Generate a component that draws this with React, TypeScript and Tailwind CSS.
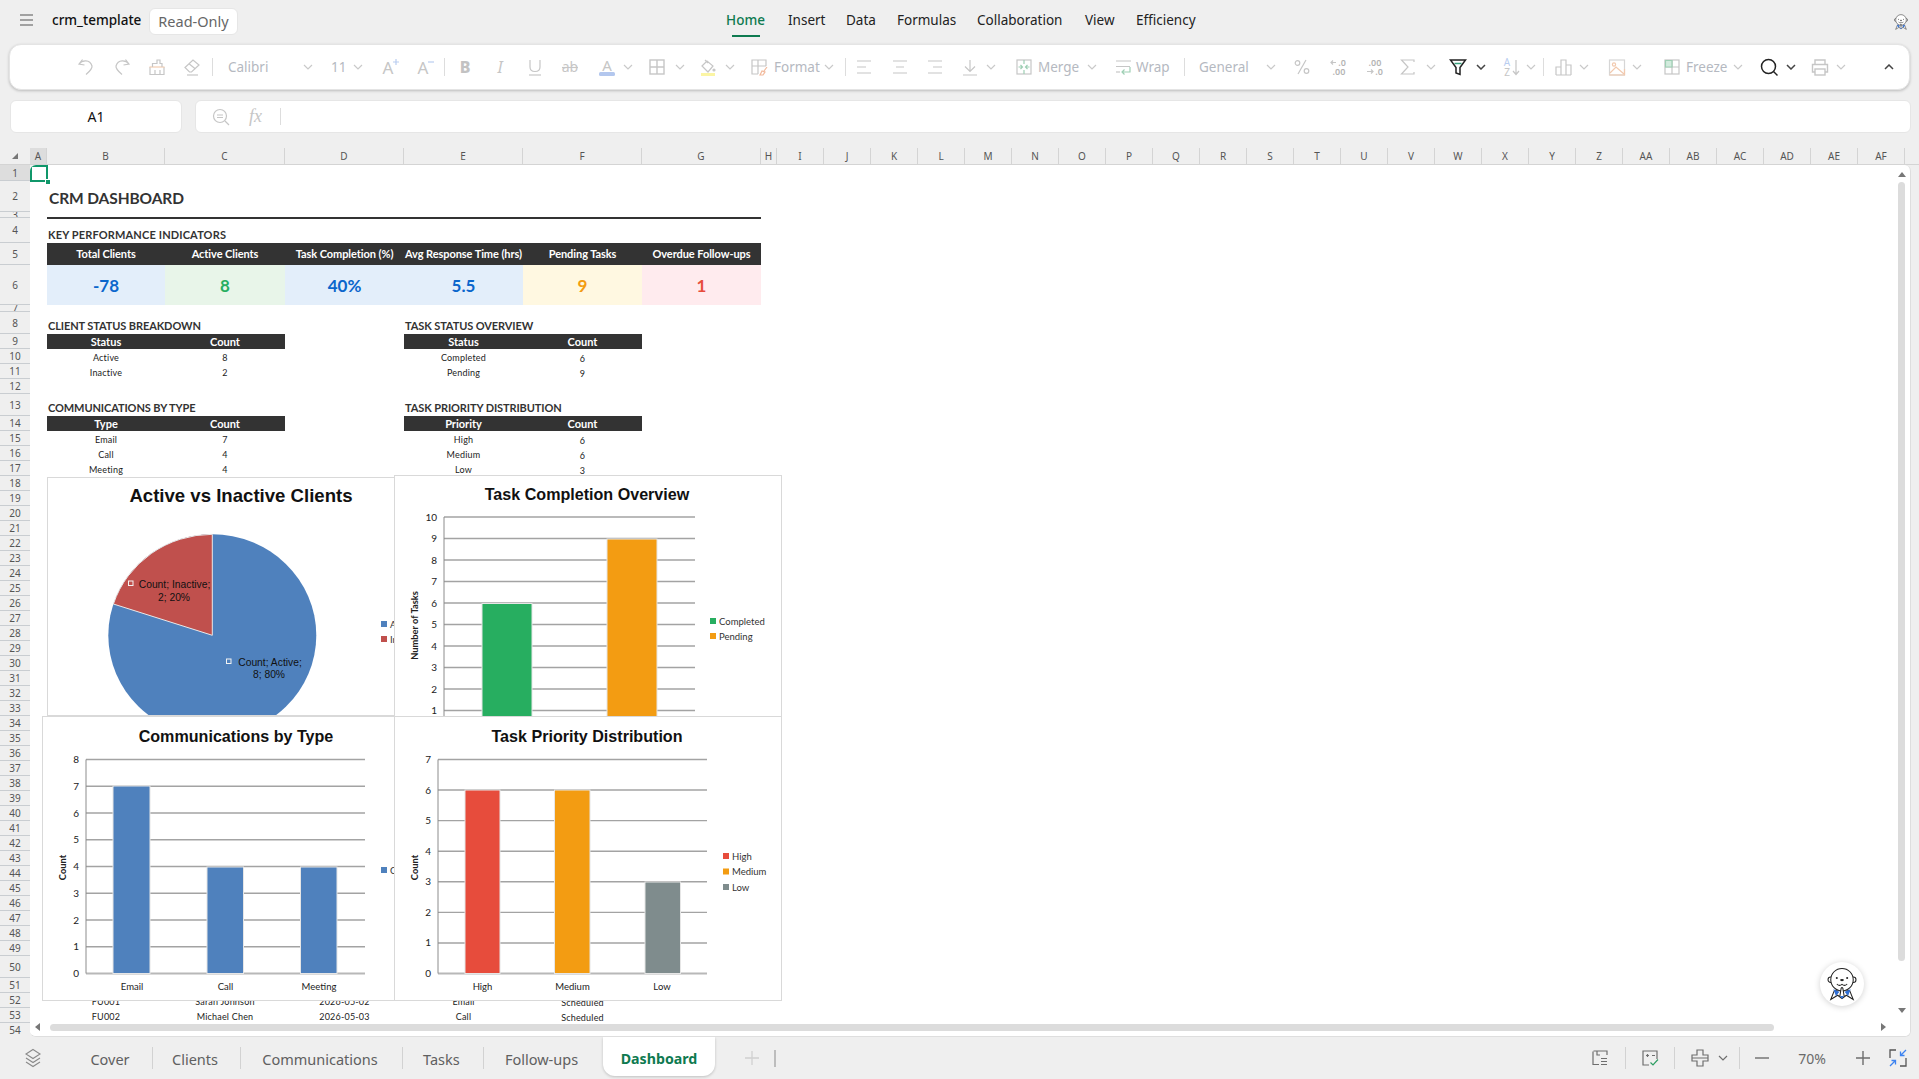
import React from 'react';

const G = '#c6c6c6';
function S({ c = '', stroke = G, sw = 1.2, children }: { c?: string; stroke?: string; sw?: number; children?: React.ReactNode }) {
  return (
    <svg width="20" height="20" viewBox="0 0 20 20" fill="none" stroke={stroke} strokeWidth={sw} className={`shrink-0 overflow-visible ${c}`}>
      {children}
    </svg>
  );
}
function Chev({ c = '', dark = false, up = false }: { c?: string; dark?: boolean; up?: boolean }) {
  return (
    <svg width="10" height="6" viewBox="0 0 10 6" fill="none" stroke={dark ? '#444' : '#c9c9c9'} strokeWidth={dark ? 1.5 : 1.2} className={`shrink-0 ${c}`}>
      <path d={up ? 'M1 5 L5 1 L9 5' : 'M1 1 L5 5 L9 1'} />
    </svg>
  );
}
function Sep({ c = '' }: { c?: string }) {
  return <div className={`w-px h-[18px] bg-[#dddddd] shrink-0 ${c}`} />;
}
function L({ c = '', children }: { c?: string; children: React.ReactNode }) {
  return <span className={`shrink-0 whitespace-nowrap text-[13.5px] leading-[20px] text-[#b5b9c1] font-['Noto_Sans'] ${c}`}>{children}</span>;
}
function GlyphText({ x, y, size, fill = G, weight, italic, children }: { x: number; y: number; size: number; fill?: string; weight?: number; italic?: boolean; children: React.ReactNode }) {
  return (
    <text x={x} y={y} fontSize={size} fill={fill} stroke="none" fontWeight={weight} fontStyle={italic ? 'italic' : undefined} textAnchor="middle" fontFamily="Noto Sans, sans-serif">
      {children}
    </text>
  );
}

function Otter({ size }: { size: number }) {
  return (
    <svg width={size} height={size} viewBox="0 0 44 44" fill="none" stroke="#222" strokeWidth="1.2">
      <path d="M9 40 L13 30 L19 28 L22 33 L25 28 L31 30 L35 40 L27 35 L22 39 L17 35 Z" fill="#fff" />
      <path d="M12 28 L19 31 L15 36 Z M32 28 L25 31 L29 36 Z M19 35 L25 35 L22 39.5 Z" fill="#2f6fd6" stroke="none" />
      <circle cx="9" cy="17" r="3.2" fill="#fff" />
      <circle cx="35" cy="17" r="3.2" fill="#fff" />
      <ellipse cx="22" cy="17" rx="13" ry="13" fill="#fff" />
      <circle cx="16" cy="15" r="1.2" fill="#222" stroke="none" />
      <circle cx="28" cy="15" r="1.2" fill="#222" stroke="none" />
      <ellipse cx="22" cy="17.5" rx="2.2" ry="1.3" fill="#222" stroke="none" />
      <path d="M16 22 Q19 25 22 22.5 Q25 25 28 22" />
      <path d="M19.5 36 L21 27 Q22 25 23 27 L24.5 36" fill="#fff" />
    </svg>
  );
}

function Toolbar() {
  return (
    <div className="mx-[9px] h-[46px] shrink-0 bg-white rounded-[12px] border border-[#e4e4e4] shadow-[0_1px_3px_rgba(0,0,0,0.22)] flex items-center">
      <S c="ml-[66px]"><path d="M6.5 2.5 L3 7 L8.5 8 M3 7 C6 3 14 2 16 9 C16.5 12 13 15 10 17.5" /></S>
      <S c="ml-[16px] -scale-x-100"><path d="M6.5 2.5 L3 7 L8.5 8 M3 7 C6 3 14 2 16 9 C16.5 12 13 15 10 17.5" /></S>
      <S c="ml-[15px]">
        <path d="M3 10 V17.5 H17 V10" /><path d="M2.5 10 H17.5" stroke="#f3cdb0" /><path d="M5.5 10 V6.5 H10 V3 H13 V6.5 H15 V10 M8 13 V17.5 M13 13 V17.5" />
      </S>
      <S c="ml-[15px]"><path d="M3 10.5 L11 3 L17 8 L9.5 15 H7.5 Z M7 6.8 L13.5 12" /><path d="M5 18 H16" /></S>
      <Sep c="ml-[10px]" />
      <L c="ml-[15px] w-[40px]">Calibri</L>
      <Chev c="ml-[35px]" />
      <L c="ml-[18px] w-[14px]">11</L>
      <Chev c="ml-[8px]" />
      <S c="ml-[17px]"><GlyphText x={8} y={17} size={17}>A</GlyphText><path d="M13 5 H19 M16 2 V8" stroke="#b9cdf0" /></S>
      <S c="ml-[15px]"><GlyphText x={8} y={17} size={17}>A</GlyphText><path d="M13 5 H19" stroke="#b9cdf0" /></S>
      <Sep c="ml-[9px]" />
      <S c="ml-[10px]"><GlyphText x={10} y={16} size={16} weight={800} fill="#c2c2c2">B</GlyphText></S>
      <S c="ml-[15px]"><GlyphText x={10} y={16} size={16} italic>I</GlyphText></S>
      <S c="ml-[15px]"><path d="M5 3 V10 Q5 14.5 10 14.5 Q15 14.5 15 10 V3" /><path d="M4 18 H16" /></S>
      <S c="ml-[15px]"><GlyphText x={10} y={15} size={14}>ab</GlyphText><path d="M2 10.5 H18" /></S>
      <S c="ml-[17px]"><GlyphText x={10} y={13.5} size={15}>A</GlyphText><rect x="2" y="15" width="16" height="4" rx="1.5" fill="#b3c7ee" stroke="none" /></S>
      <Chev c="ml-[6px]" />
      <S c="ml-[14px]" sw={1.4}><rect x="3" y="3" width="14" height="14" /><path d="M10 3 V17 M3 10 H17" /></S>
      <Chev c="ml-[8px]" />
      <S c="ml-[13px]"><path d="M4 9 L9 4 L15 9 L10 15 Z M7 3 L10 6" /><circle cx="16" cy="13" r="1" fill={G} /><rect x="3" y="16" width="14" height="3" fill="#fbf5a4" stroke="none" /></S>
      <Chev c="ml-[7px]" />
      <S c="ml-[14px]"><path d="M9 17 H3 V3 H17 V9 M3 9 H17 M9 3 V17" /><path d="M11 18 L13 14 L16 15 L14 18 Z M15 14 L18 10" stroke="#f2b99b" /></S>
      <L c="ml-[5px] w-[44px]">Format</L>
      <Chev c="ml-[6px]" />
      <Sep c="ml-[11px]" />
      <S c="ml-[8px]"><path d="M3 4 H17 M3 10 H12 M3 16 H17" /></S>
      <S c="ml-[16px]"><path d="M3 4 H17 M6 10 H14 M3 16 H17" /></S>
      <S c="ml-[15px]"><path d="M3 4 H17 M8 10 H17 M3 16 H17" /></S>
      <S c="ml-[15px]"><path d="M10 3 V14 M5 9.5 L10 14.5 L15 9.5 M3 18 H17" /></S>
      <Chev c="ml-[6px]" />
      <S c="ml-[18px]"><rect x="3" y="3" width="14" height="14" /><path d="M10 3 V7 M10 13 V17 M4.5 10 H8 M6.5 8 L8.5 10 L6.5 12 M15.5 10 H12 M13.5 8 L11.5 10 L13.5 12" stroke="#9ecfb4" /></S>
      <L c="ml-[4px] w-[41px]">Merge</L>
      <Chev c="ml-[8px]" />
      <S c="ml-[16px]"><path d="M3 4 H18 M3 9.5 H17" /><path d="M3 15 H7" /><path d="M17 10 V15 H9 M11.5 12.5 L9 15 L11.5 17.5" stroke="#9ecfb4" /></S>
      <L c="ml-[3px] w-[33px]">Wrap</L>
      <Sep c="ml-[15px]" />
      <L c="ml-[14px] w-[48px]">General</L>
      <Chev c="ml-[19px]" />
      <S c="ml-[16px]"><path d="M14 3 L6 17" /><circle cx="5.5" cy="6" r="2.3" /><circle cx="14.5" cy="14" r="2.3" /></S>
      <S c="ml-[16px]">
        <GlyphText x={14} y={9} size={9} fill="#b4b4b4" weight={600}>.0</GlyphText><GlyphText x={11} y={18} size={9} fill="#b4b4b4" weight={600}>.00</GlyphText><path d="M8 5.5 H3 M5 3.5 L3 5.5 L5 7.5" />
      </S>
      <S c="ml-[16px]">
        <GlyphText x={11} y={9} size={9} fill="#b4b4b4" weight={600}>.00</GlyphText><GlyphText x={15} y={18} size={9} fill="#b4b4b4" weight={600}>.0</GlyphText><path d="M3 14.5 H9 M7 12.5 L9 14.5 L7 16.5" />
      </S>
      <S c="ml-[14px]"><path d="M16 5 V3 H3.5 L10 10 L3.5 17 H16 V15" /></S>
      <Chev c="ml-[8px]" />
      <S c="ml-[12px]" stroke="#222" sw={1.5}><path d="M2.5 3 H17.5 L12 10.5 V17.5 L8 16 V10.5 Z" /><path d="M6.5 6.5 H13.5" stroke="#3aa17e" /></S>
      <Chev dark c="ml-[8px]" />
      <S c="ml-[15px]"><GlyphText x={6} y={9} size={10} fill="#b9cdf0">A</GlyphText><GlyphText x={6} y={19} size={10}>Z</GlyphText><path d="M15 3 V17 M12 14 L15 17.5 L18 14" /></S>
      <Chev c="ml-[5px]" />
      <Sep c="ml-[7px]" />
      <S c="ml-[10px]"><path d="M2 18 V10 H7 V18 M7 18 V3 H12 V18 M12 18 V8 H17 V18 M2 18 H17" /></S>
      <Chev c="ml-[5px]" />
      <S c="ml-[18px]" stroke="#f2c9ae"><rect x="2.5" y="3" width="15" height="15" stroke="#d6d6d6" /><path d="M3 16 L9 10 L17 17" /><circle cx="7" cy="7.5" r="1.6" /><path d="M2.5 18 H17.5 V12" /></S>
      <Chev c="ml-[5px]" />
      <S c="ml-[20px]"><rect x="3" y="3" width="14" height="14" /><path d="M10 3 V17 M3 10 H17" /><path d="M3.5 3.5 H10 V10 H3.5 Z" fill="#d2ebdd" stroke="#9ecfb4" /></S>
      <L c="ml-[4px] w-[40px]">Freeze</L>
      <Chev c="ml-[7px]" />
      <S c="ml-[16px]" stroke="#222" sw={1.5}><circle cx="9.5" cy="9.5" r="7" /><path d="M14.5 14.5 L18.5 18.5" /></S>
      <Chev dark c="ml-[7px]" />
      <S c="ml-[14px]" sw={1.4}><path d="M5 7 V3 H15 V7 M5 15 H2.5 V7.5 H17.5 V15 H15" /><rect x="5" y="12" width="10" height="6" /></S>
      <Chev c="ml-[6px]" />
      <Chev dark up c="ml-[38px]" />
    </div>
  );
}

const COLS = ['A', 'B', 'C', 'D', 'E', 'F', 'G', 'H', 'I', 'J', 'K', 'L', 'M', 'N', 'O', 'P', 'Q', 'R', 'S', 'T', 'U', 'V', 'W', 'X', 'Y', 'Z', 'AA', 'AB', 'AC', 'AD', 'AE', 'AF'];
const COLGRID = 'grid-cols-[17px_118px_120px_119px_119px_119px_119px_16px_repeat(24,47px)]';
const ROWGRID = 'grid-rows-[16px_31px_6px_25px_22px_40px_7px_22px_15px_15px_15px_15px_22px_15px_15px_15px_15px_repeat(32,15px)_22px_15px_15px_15px_15px]';
const ROWS = Array.from({ length: 54 }, (_, i) => i + 1);

const dark = "bg-[#333333] text-white font-bold flex items-center justify-center whitespace-nowrap pt-[1px]";
const kpiH = `${dark} text-[11px] tracking-[-0.07px]`;
const tblH = `${dark} text-[11px] tracking-[0px]`;
const kpiV = 'flex items-center justify-center text-[17px] font-bold pt-[1px]';
const sec = 'flex items-end pl-[1px] text-[11px] font-bold text-[#333333] whitespace-nowrap tracking-[-0.1px]';
const cell = 'flex items-center justify-center text-[9px] text-[#222222] whitespace-nowrap tracking-[0.2px] pt-[2px]';
const cellN = 'flex items-center justify-center text-[9px] text-[#222222] whitespace-nowrap tracking-[0.2px] pt-[4px]';

type Bar = { x0: number; x1: number; top: number; fill: string };
function BarChart({ title, tx, ty, left, top, w, h, x0, x1, yTop, yBase, max, bars, yTitle, yTitleX, tickX, children, box }: {
  title: string; tx: number; ty: number; left: number; top: number; w: number; h: number; x0: number; x1: number; yTop: number; yBase: number; max: number; bars: Bar[]; yTitle: string; yTitleX: number; tickX: number; children?: React.ReactNode; box: string;
}) {
  const step = (yBase - yTop) / max;
  const ticks = Array.from({ length: max + 1 }, (_, i) => i);
  return (
    <div className={`absolute bg-white border border-[#d9d9d9] overflow-hidden ${box}`}>
      <svg className="block w-full h-full" viewBox={`${left + 1} ${top + 1} ${w - 2} ${h - 2}`}>
        <text x={tx} y={ty} textAnchor="middle" className="font-['Liberation_Sans'] font-bold text-[16.1px] fill-[#111111]">{title}</text>
        {ticks.map((t) => (
          <g key={t}>
            <line x1={x0} x2={x1} y1={yBase - t * step} y2={yBase - t * step} stroke={t === 0 ? '#b8b8b8' : '#a3a3a3'} strokeWidth={t === 0 ? 2 : 1.4} />
            <text x={tickX} y={yBase - t * step + 3.5} textAnchor="end" className="font-['Lato'] text-[10px] fill-[#222222]">{t}</text>
          </g>
        ))}
        <line x1={x0} x2={x0} y1={yTop} y2={yBase} stroke="#8c8c8c" />
        {bars.map((b, i) => (
          <rect key={i} x={b.x0} y={b.top} width={b.x1 - b.x0} height={yBase - b.top} fill={b.fill} stroke="#e6e6e6" strokeWidth="1" />
        ))}
        <text transform={`translate(${yTitleX} ${(yTop + yBase) / 2 + 1}) rotate(-90)`} textAnchor="middle" className="font-['Lato'] font-bold text-[9.3px] fill-[#222222]">{yTitle}</text>
        {children}
      </svg>
    </div>
  );
}
function LegendItem({ x, y, fill, label }: { x: number; y: number; fill: string; label: string }) {
  return (
    <g>
      <rect x={x} y={y - 3} width="6" height="6" fill={fill} />
      <text x={x + 9} y={y + 3.5} className="font-['Lato'] text-[9.5px] fill-[#333333]">{label}</text>
    </g>
  );
}
function Cat({ x, label }: { x: number; label: string }) {
  return <text x={x} y={990} textAnchor="middle" className="font-['Lato'] text-[9.5px] fill-[#222222]">{label}</text>;
}

function Charts() {
  return (
    <>
      <div className="absolute left-[17px] top-[312px] w-[348px] h-[239px] bg-white border border-[#d9d9d9] overflow-hidden">
        <svg className="block w-full h-full" viewBox="48 478 346 237">
          <text x={241} y={502} textAnchor="middle" className="font-['Liberation_Sans'] font-bold text-[18.6px] fill-[#111111]">Active vs Inactive Clients</text>
          <ellipse cx="212.3" cy="635.3" rx="104" ry="101" fill="#4f81bd" />
          <path d="M212.3 635.3 L113.4 604 A104 101 0 0 1 212.3 534.3 Z" fill="#c0504d" stroke="#e9e9e9" strokeWidth="1" />
          <rect x="128.5" y="581" width="4.5" height="4.5" fill="none" stroke="#f3f3f3" />
          <text x={174.5} y={588} textAnchor="middle" className="font-['Liberation_Sans'] text-[10.3px] fill-[#111111]">Count; Inactive;</text>
          <text x={174} y={601} textAnchor="middle" className="font-['Liberation_Sans'] text-[10.3px] fill-[#111111]">2; 20%</text>
          <rect x="226.5" y="659" width="4.5" height="4.5" fill="none" stroke="#f3f3f3" />
          <text x={270} y={666} textAnchor="middle" className="font-['Liberation_Sans'] text-[10.3px] fill-[#111111]">Count; Active;</text>
          <text x={269} y={678} textAnchor="middle" className="font-['Liberation_Sans'] text-[10.3px] fill-[#111111]">8; 80%</text>
          <LegendItem x={381} y={624} fill="#4f81bd" label="Active" />
          <LegendItem x={381} y={639} fill="#c0504d" label="Inactive" />
        </svg>
      </div>
      <BarChart box="left-[364px] top-[310px] w-[388px] h-[242px]" title="Task Completion Overview" tx={587} ty={500} left={394} top={475} w={388} h={242} x0={444} x1={695} yTop={517} yBase={732} max={10} yTitle="Number of Tasks" yTitleX={418} tickX={437}
        bars={[{ x0: 482, x1: 532, top: 603.5, fill: '#27ae60' }, { x0: 607, x1: 657, top: 539, fill: '#f39c12' }]}>
        <LegendItem x={710} y={621} fill="#27ae60" label="Completed" />
        <LegendItem x={710} y={636} fill="#f39c12" label="Pending" />
      </BarChart>
      <BarChart box="left-[12px] top-[551px] w-[353px] h-[285px]" title="Communications by Type" tx={236} ty={742} left={42} top={716} w={353} h={285} x0={86} x1={365} yTop={759.5} yBase={973.5} max={8} yTitle="Count" yTitleX={66} tickX={79}
        bars={[{ x0: 113, x1: 150, top: 786, fill: '#4f81bd' }, { x0: 207, x1: 243.5, top: 867, fill: '#4f81bd' }, { x0: 300.5, x1: 337, top: 867, fill: '#4f81bd' }]}>
        <Cat x={132} label="Email" /><Cat x={225.5} label="Call" /><Cat x={319} label="Meeting" />
        <LegendItem x={381} y={870} fill="#4f81bd" label="Count" />
      </BarChart>
      <BarChart box="left-[364px] top-[551px] w-[388px] h-[285px]" title="Task Priority Distribution" tx={587} ty={742} left={394} top={716} w={388} h={285} x0={438} x1={707} yTop={759.5} yBase={973.5} max={7} yTitle="Count" yTitleX={418} tickX={431}
        bars={[{ x0: 465, x1: 500, top: 790, fill: '#e74c3c' }, { x0: 554.5, x1: 590, top: 790, fill: '#f39c12' }, { x0: 645, x1: 680.5, top: 882, fill: '#7f8c8d' }]}>
        <Cat x={482.5} label="High" /><Cat x={572.5} label="Medium" /><Cat x={662} label="Low" />
        <LegendItem x={723} y={856} fill="#e74c3c" label="High" />
        <LegendItem x={723} y={871.5} fill="#f39c12" label="Medium" />
        <LegendItem x={723} y={887} fill="#7f8c8d" label="Low" />
      </BarChart>
    </>
  );
}

function Sheet() {
  return (
    <div className="flex-1 min-h-0 flex flex-col relative">
      <div className="h-[17px] shrink-0 flex border-b border-[#d4d4d4]">
        <div className="w-[30px] shrink-0 flex items-center justify-center">
          <svg width="8" height="8" viewBox="0 0 8 8"><path d="M7 1 V7 H1 Z" fill="#777" /></svg>
        </div>
        <div className={`grid ${COLGRID} flex-1`}>
          {COLS.map((n, i) => (
            <div key={n} className={`flex items-center justify-center text-[10px] text-[#555555] border-r border-[#d4d4d4] font-['Noto_Sans'] ${i === 0 ? 'bg-[#dddddd]' : ''}`}>{n}</div>
          ))}
        </div>
      </div>
      <div className="flex-1 min-h-0 flex">
        <div className={`w-[30px] shrink-0 grid ${ROWGRID} overflow-hidden`}>
          {ROWS.map((n) => (
            <div key={n} className={`flex items-center justify-center overflow-hidden text-[10px] leading-none text-[#555555] border-b border-[#c9cdd1] font-['Noto_Sans'] ${n === 1 ? 'bg-[#dddddd]' : ''}`}>{n}</div>
          ))}
        </div>
        <div className="flex-1 min-w-0 mr-[8px] bg-white rounded-[6px] border-r border-b border-[#dedede] relative overflow-hidden">
          <div className={`grid ${COLGRID} ${ROWGRID} font-['Lato'] text-[#222222]`}>
            <div className="col-start-2 col-span-6 row-start-2 flex items-center pl-[2px] pt-[4px] text-[15.5px] font-bold text-[#333333] tracking-[-0.1px] whitespace-nowrap">CRM DASHBOARD</div>
            <div className="col-start-2 col-span-6 row-start-3 border-b-2 border-[#333333] translate-y-[1px]" />
            <div className={`col-start-2 col-span-3 row-start-4 ${sec} tracking-[0.15px]`}>KEY PERFORMANCE INDICATORS</div>

            <div className={`col-start-2 row-start-5 ${kpiH}`}>Total Clients</div>
            <div className={`col-start-3 row-start-5 ${kpiH}`}>Active Clients</div>
            <div className={`col-start-4 row-start-5 ${kpiH}`}>Task Completion (%)</div>
            <div className={`col-start-5 row-start-5 ${kpiH}`}>Avg Response Time (hrs)</div>
            <div className={`col-start-6 row-start-5 ${kpiH}`}>Pending Tasks</div>
            <div className={`col-start-7 row-start-5 ${kpiH}`}>Overdue Follow-ups</div>

            <div className={`col-start-2 row-start-6 ${kpiV} bg-[#e3eefa] text-[#0b66cc]`}>-78</div>
            <div className={`col-start-3 row-start-6 ${kpiV} bg-[#e8f5e9] text-[#27ae60]`}>8</div>
            <div className={`col-start-4 row-start-6 ${kpiV} bg-[#e3eefa] text-[#0b66cc]`}>40%</div>
            <div className={`col-start-5 row-start-6 ${kpiV} bg-[#e3eefa] text-[#0b66cc]`}>5.5</div>
            <div className={`col-start-6 row-start-6 ${kpiV} bg-[#fff8e1] text-[#f39c12]`}>9</div>
            <div className={`col-start-7 row-start-6 ${kpiV} bg-[#ffebee] text-[#e74c3c]`}>1</div>

            <div className={`col-start-2 col-span-2 row-start-8 ${sec}`}>CLIENT STATUS BREAKDOWN</div>
            <div className={`col-start-5 col-span-2 row-start-8 ${sec}`}>TASK STATUS OVERVIEW</div>
            <div className={`col-start-2 row-start-9 ${tblH}`}>Status</div>
            <div className={`col-start-3 row-start-9 ${tblH}`}>Count</div>
            <div className={`col-start-5 row-start-9 ${tblH}`}>Status</div>
            <div className={`col-start-6 row-start-9 ${tblH}`}>Count</div>
            <div className={`col-start-2 row-start-10 ${cell}`}>Active</div>
            <div className={`col-start-3 row-start-10 ${cell}`}>8</div>
            <div className={`col-start-5 row-start-10 ${cell}`}>Completed</div>
            <div className={`col-start-6 row-start-10 ${cellN}`}>6</div>
            <div className={`col-start-2 row-start-11 ${cell}`}>Inactive</div>
            <div className={`col-start-3 row-start-11 ${cell}`}>2</div>
            <div className={`col-start-5 row-start-11 ${cell}`}>Pending</div>
            <div className={`col-start-6 row-start-11 ${cellN}`}>9</div>

            <div className={`col-start-2 col-span-2 row-start-13 ${sec}`}>COMMUNICATIONS BY TYPE</div>
            <div className={`col-start-5 col-span-2 row-start-13 ${sec}`}>TASK PRIORITY DISTRIBUTION</div>
            <div className={`col-start-2 row-start-14 ${tblH}`}>Type</div>
            <div className={`col-start-3 row-start-14 ${tblH}`}>Count</div>
            <div className={`col-start-5 row-start-14 ${tblH}`}>Priority</div>
            <div className={`col-start-6 row-start-14 ${tblH}`}>Count</div>
            <div className={`col-start-2 row-start-15 ${cell}`}>Email</div>
            <div className={`col-start-3 row-start-15 ${cell}`}>7</div>
            <div className={`col-start-5 row-start-15 ${cell}`}>High</div>
            <div className={`col-start-6 row-start-15 ${cellN}`}>6</div>
            <div className={`col-start-2 row-start-16 ${cell}`}>Call</div>
            <div className={`col-start-3 row-start-16 ${cell}`}>4</div>
            <div className={`col-start-5 row-start-16 ${cell}`}>Medium</div>
            <div className={`col-start-6 row-start-16 ${cellN}`}>6</div>
            <div className={`col-start-2 row-start-17 ${cell}`}>Meeting</div>
            <div className={`col-start-3 row-start-17 ${cell}`}>4</div>
            <div className={`col-start-5 row-start-17 ${cell}`}>Low</div>
            <div className={`col-start-6 row-start-17 ${cellN}`}>3</div>

            <div className={`col-start-2 row-start-52 ${cell}`}>FU001</div>
            <div className={`col-start-3 row-start-52 ${cell}`}>Sarah Johnson</div>
            <div className={`col-start-4 row-start-52 ${cell}`}>2026-05-02</div>
            <div className={`col-start-5 row-start-52 ${cell}`}>Email</div>
            <div className={`col-start-6 row-start-52 ${cellN}`}>Scheduled</div>
            <div className={`col-start-2 row-start-53 ${cell}`}>FU002</div>
            <div className={`col-start-3 row-start-53 ${cell}`}>Michael Chen</div>
            <div className={`col-start-4 row-start-53 ${cell}`}>2026-05-03</div>
            <div className={`col-start-5 row-start-53 ${cell}`}>Call</div>
            <div className={`col-start-6 row-start-53 ${cellN}`}>Scheduled</div>
          </div>

          <Charts />

          <div className="absolute left-0 top-0 w-[18px] h-[17px] border-2 border-[#10976a]" />
          <div className="absolute left-[15px] top-[14px] w-[4px] h-[4px] bg-[#10976a] border border-white box-content" />

          <div className="absolute left-0 right-0 bottom-0 h-[14px] bg-white" />
          <div className="absolute left-[20px] bottom-[5px] w-[1724px] h-[7px] rounded-full bg-[#dcdcdc]" />
          <div className="absolute left-[5px] bottom-[5px] w-0 h-0 border-y-[4px] border-y-transparent border-r-[5px] border-r-[#777777]" />
          <div className="absolute left-[1851px] bottom-[5px] w-0 h-0 border-y-[4px] border-y-transparent border-l-[5px] border-l-[#777777]" />
          <div className="absolute left-[1868px] top-[17px] w-[7px] h-[779px] rounded-full bg-[#dcdcdc]" />
          <div className="absolute left-[1868px] top-[7px] w-0 h-0 border-x-[4px] border-x-transparent border-b-[5px] border-b-[#777777]" />
          <div className="absolute left-[1868px] top-[843px] w-0 h-0 border-x-[4px] border-x-transparent border-t-[5px] border-t-[#777777]" />
          <div className="absolute left-[1790px] top-[797px] w-[44px] h-[44px] rounded-full bg-white shadow-[0_1px_6px_rgba(0,0,0,0.18)] flex items-center justify-center">
            <Otter size={38} />
          </div>
        </div>
      </div>
    </div>
  );
}

const tab = "shrink-0 mt-[3px] text-[14.5px] text-[#606060] font-['Noto_Sans'] whitespace-nowrap text-center";
const tsep = 'w-px h-[22px] bg-[#d2d2d2] shrink-0';

function TabBar() {
  return (
    <div className="h-[42px] shrink-0 flex items-center">
      <S c="ml-[23px]" stroke="#8a8a8a" sw={1.1}><path d="M10 1.5 L17 6 L10 10.5 L3 6 Z M3 10 L10 14.5 L17 10 M3 14 L10 18.5 L17 14" /></S>
      <span className={`${tab} ml-[47px] w-[40px]`}>Cover</span>
      <div className={`${tsep} ml-[22px]`} />
      <span className={`${tab} ml-[19px] w-[46px]`}>Clients</span>
      <div className={`${tsep} ml-[22px]`} />
      <span className={`${tab} ml-[21px] w-[116px]`}>Communications</span>
      <div className={`${tsep} ml-[24px]`} />
      <span className={`${tab} ml-[20px] w-[36px]`}>Tasks</span>
      <div className={`${tsep} ml-[24px]`} />
      <span className={`${tab} ml-[20px] w-[75px]`}>Follow-ups</span>
      <div className="ml-[24px] w-[112px] h-[39px] self-start pt-[5px] bg-white rounded-b-[12px] shadow-[0_1px_3px_rgba(0,0,0,0.2)] flex items-center justify-center text-[14.2px] font-bold text-[#0e7a50] font-['Noto_Sans'] shrink-0">Dashboard</div>
      <svg width="16" height="16" viewBox="0 0 16 16" stroke="#d0d0d0" strokeWidth="1.3" className="ml-[29px] shrink-0"><path d="M8 1 V15 M1 8 H15" /></svg>
      <div className="ml-[14px] w-[2px] h-[17px] bg-[#bdbdbd] shrink-0" />
      <S c="ml-[814px]" stroke="#6e6e6e"><path d="M7 3 H17 V7 M3 3.5 V16.5 H9 M3.5 3 H7 V7 H10 M11 10.5 H17 M11 13.5 H17 M11 16.5 H17" /></S>
      <div className={`${tsep} ml-[15px]`} />
      <S c="ml-[14px]" stroke="#6e6e6e"><path d="M9 17 H3 V3 H17 V11" /><path d="M6 7.5 H9 M7.5 6 V9 M12 7.5 H15" /><path d="M10.5 14.5 L13 17 L18 11.5" stroke="#2f9e63" /></S>
      <div className={`${tsep} ml-[14px]`} />
      <S c="ml-[15px]" stroke="#6e6e6e"><path d="M7 2 H13 V7 H18 V13 H13 V18 H7 V13 H2 V7 H7 Z M2 10 H18" /></S>
      <svg width="10" height="6" viewBox="0 0 10 6" fill="none" stroke="#6e6e6e" strokeWidth="1.2" className="ml-[8px] shrink-0"><path d="M1 1 L5 5 L9 1" /></svg>
      <div className={`${tsep} ml-[11px]`} />
      <svg width="16" height="16" viewBox="0 0 16 16" stroke="#6e6e6e" strokeWidth="1.4" className="ml-[14px] shrink-0"><path d="M1 8 H15" /></svg>
      <span className="ml-[28px] w-[28px] shrink-0 text-[14px] text-[#6a6a6a] font-['Noto_Sans'] text-center">70%</span>
      <svg width="16" height="16" viewBox="0 0 16 16" stroke="#6e6e6e" strokeWidth="1.4" className="ml-[29px] shrink-0"><path d="M1 8 H15 M8 1 V15" /></svg>
      <S c="ml-[17px]" stroke="#555555" sw={1.3}><path d="M2 10 V2 H8 M18 10 V18 H12" /><path d="M18 2 L12.5 7.5 M12.5 3.5 V7.5 H16.5 M2 18 L7.5 12.5 M3.5 12.5 H7.5 V16.5" stroke="#3d83f0" /></S>
    </div>
  );
}

export default function App() {
  return (
    <div className="w-[1919px] h-[1079px] bg-[#efefef] overflow-hidden flex flex-col text-[#222222]">
      <div className="h-[44px] shrink-0 pb-[4px] flex items-center font-['Noto_Sans'] text-[13.5px] whitespace-nowrap">
        <svg width="13" height="12" viewBox="0 0 13 12" stroke="#555" strokeWidth="1.2" className="ml-[20px] shrink-0"><path d="M0 1 H13 M0 6 H13 M0 11 H13" /></svg>
        <span className="ml-[19px] mt-[1px] w-[88px] text-[13.5px] font-medium text-[#111111]">crm_template</span>
        <span className="ml-[9px] mt-[3px] w-[89px] h-[27px] bg-white rounded-[6px] border border-[#e6e6e6] flex items-center justify-center text-[14.5px] text-[#666666]">Read-Only</span>
        <div className="ml-[488px] w-[39px] h-[40px] relative flex items-center justify-center font-medium text-[#0e7a50]">
          Home
          <div className="absolute left-[6px] right-[5px] bottom-[3px] h-[2px] bg-[#0e7a50]" />
        </div>
        <span className="ml-[23px] w-[36px]">Insert</span>
        <span className="ml-[22px] w-[31px]">Data</span>
        <span className="ml-[20px] w-[58px]">Formulas</span>
        <span className="ml-[22px] w-[86px]">Collaboration</span>
        <span className="ml-[22px] w-[29px]">View</span>
        <span className="ml-[22px] w-[60px]">Efficiency</span>
        <div className="ml-auto mr-[9px] mt-[4px]"><Otter size={18} /></div>
      </div>
      <Toolbar />
      <div className="h-[33px] shrink-0 mt-[10px] flex">
        <div className="ml-[10px] w-[172px] bg-white rounded-[6px] border border-[#e6e6e6] flex items-center justify-center text-[14px] text-[#111111] font-['Noto_Sans']">A1</div>
        <div className="ml-[13px] w-[1716px] bg-white rounded-[6px] border border-[#e6e6e6] flex items-center">
          <S c="ml-[15px]"><circle cx="9" cy="9" r="6.5" /><path d="M6 8 H12 M6 10.5 H12 M14 14 L18 18" /></S>
          <span className="ml-[18px] w-[18px] text-[18px] italic text-[#c6c6c6] font-['Liberation_Serif'] shrink-0">fx</span>
          <div className="ml-[13px] w-px h-[17px] bg-[#dddddd] shrink-0" />
        </div>
      </div>
      <div className="h-[15px] shrink-0" />
      <Sheet />
      <TabBar />
    </div>
  );
}
